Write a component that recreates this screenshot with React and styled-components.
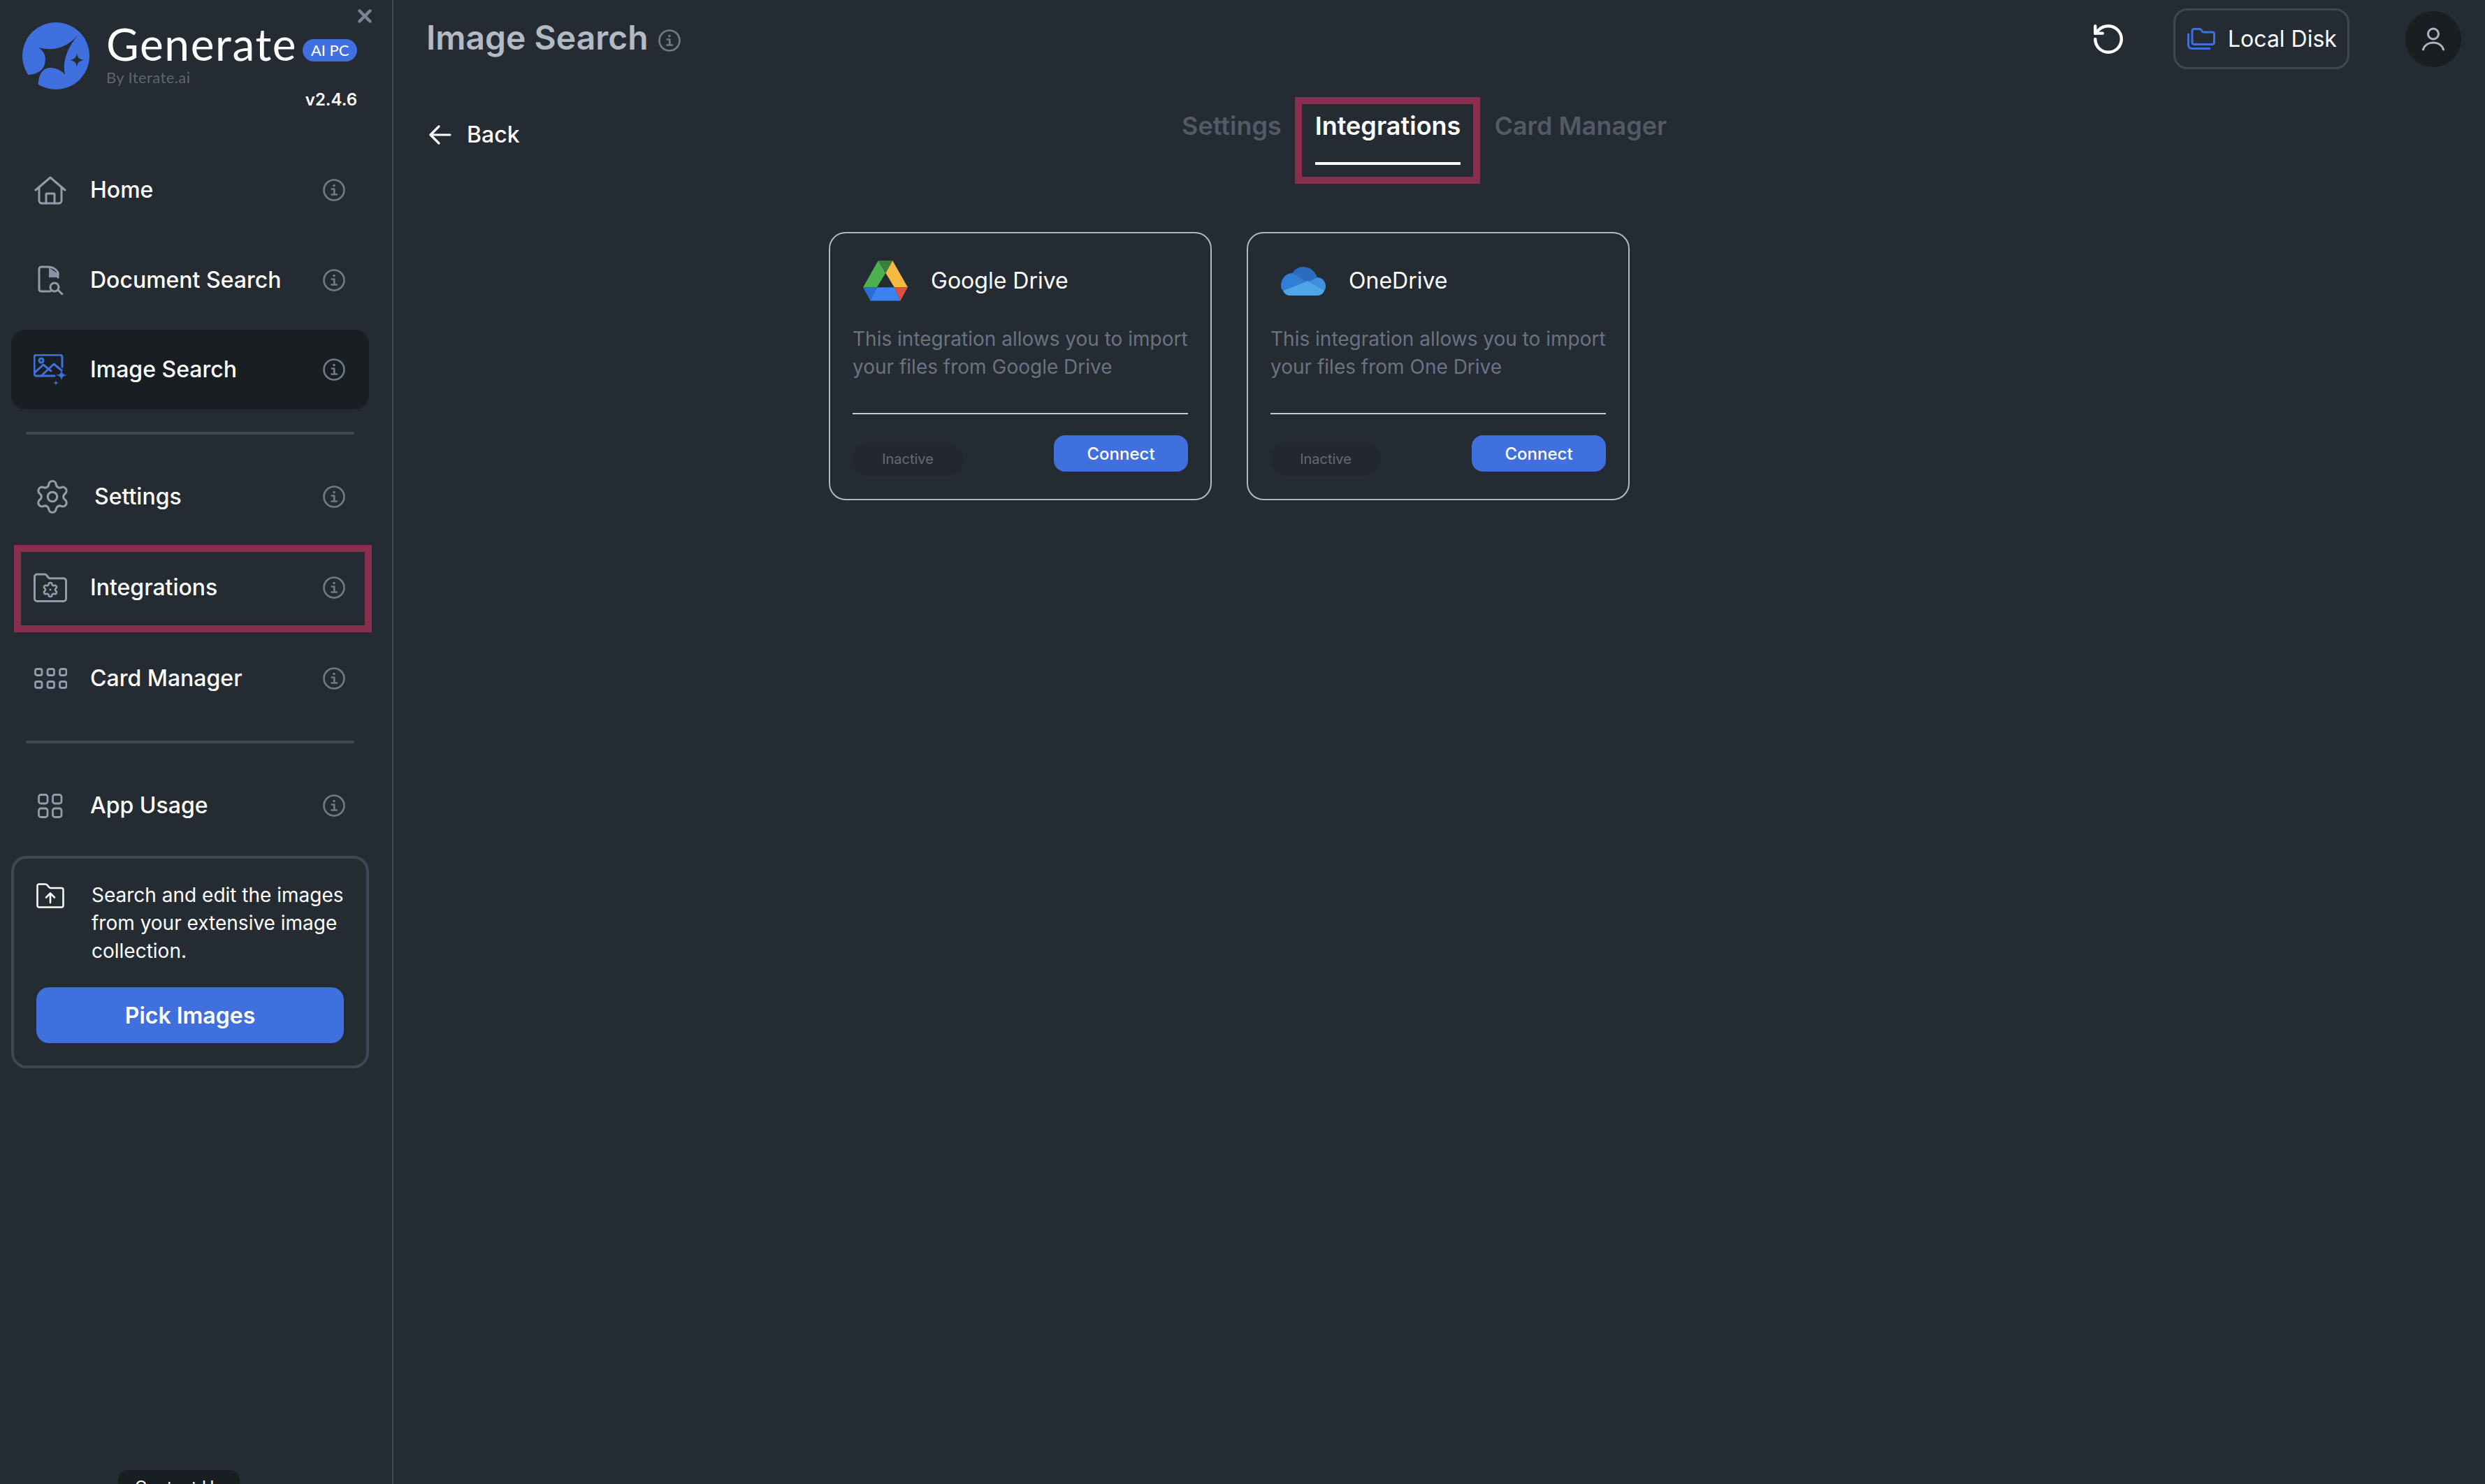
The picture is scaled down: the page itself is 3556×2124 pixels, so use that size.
import React from "react";
import styled, { createGlobalStyle } from "styled-components";
import { Settings as GearIcon, RotateCcw } from "lucide-react";

const BG = "#242b33";
const DARK = "#191e22";
const LINE = "#3f4754";
const BLUE = "#4070de";
const MARK = "#8a2e4f";
const ICON = "#939cab";

const Global = createGlobalStyle`
  html, body { margin: 0; padding: 0; background: ${BG}; overflow: hidden; }
  body { font-family: Inter, "Liberation Sans", sans-serif; color: #fff; }
  * { box-sizing: border-box; }
`;

const Page = styled.div`
  display: flex;
  width: 3556px;
  height: 2124px;
  background: ${BG};
  overflow: hidden;
`;

const Sidebar = styled.aside`
  position: relative;
  flex: 0 0 563px;
  height: 100%;
  display: flex;
  flex-direction: column;
  padding: 0 33px 0 16px;
  border-right: 2px solid ${LINE};
  overflow: hidden;
`;

const Brand = styled.div`
  position: relative;
  height: 215px;
  padding: 32px 0 0 16px;
`;

const CloseButton = styled.button`
  position: absolute;
  top: 13px;
  right: -4px;
  width: 20px;
  height: 20px;
  padding: 0;
  border: 0;
  background: none;
  display: block;
  svg { display: block; }
`;

const BrandRow = styled.div`
  display: flex;
  gap: 24px;
`;

const BrandText = styled.div`
  display: flex;
  flex-direction: column;
`;

const BrandTitleRow = styled.div`
  display: flex;
  align-items: flex-start;
  gap: 8px;
  height: 62px;
`;

const BrandName = styled.span`
  font-family: Lato, sans-serif;
  font-size: 64px;
  font-weight: 400;
  line-height: 62px;
  letter-spacing: 1.6px;
  color: #fff;
`;

const BrandBadge = styled.span`
  margin-top: 24px;
  width: 78px;
  height: 32px;
  border-radius: 16px;
  background: ${BLUE};
  color: #fff;
  font-family: Lato, sans-serif;
  font-size: 22px;
  line-height: 32px;
  text-align: center;
`;

const BrandBy = styled.span`
  font-family: Lato, sans-serif;
  font-size: 22px;
  line-height: 26px;
  letter-spacing: 0.4px;
  color: #5f6670;
  margin-top: 4px;
`;

const Version = styled.div`
  position: absolute;
  top: 128px;
  right: 17px;
  font-size: 24px;
  font-weight: 600;
  line-height: 30px;
  color: #fff;
`;

const NavGroup = styled.nav`
  display: flex;
  flex-direction: column;
  gap: ${(p) => p.$gap}px;
`;

const NavRow = styled.div`
  position: relative;
  display: flex;
  align-items: center;
  height: 114px;
  padding: 0 34px 0 32px;
  border-radius: 20px;
  background: ${(p) => (p.$active ? DARK : "transparent")};
  ${(p) =>
    p.$marked
      ? `&::after { content: ""; position: absolute; top: -4px; left: 4px; right: -4px; bottom: -7px; border: 10px solid ${MARK}; }`
      : ""}
`;

const NavIcon = styled.span`
  flex: 0 0 48px;
  display: flex;
  align-items: center;
  justify-content: center;
  color: ${(p) => (p.$active ? BLUE : ICON)};
  svg { display: block; }
`;

const NavLabel = styled.span`
  flex: 1;
  margin-left: 33px;
  font-size: 32px;
  font-weight: 500;
  line-height: 40px;
  color: #fff;
`;

const Divider = styled.div`
  height: 4px;
  margin: ${(p) => p.$top}px 21px ${(p) => p.$bottom}px;
  background: ${LINE};
`;

const PromoCard = styled.section`
  margin-top: 15px;
  height: 304px;
  padding: 32px;
  border: 4px solid ${LINE};
  border-radius: 22px;
`;

const PromoBody = styled.div`
  display: flex;
  gap: 39px;
  height: 120px;
  svg { display: block; flex: 0 0 40px; margin-top: 3px; }
`;

const PromoText = styled.p`
  margin: 0;
  font-size: 28px;
  font-weight: 400;
  line-height: 40px;
  color: #fff;
  white-space: nowrap;
`;

const PickButton = styled.button`
  display: block;
  width: 100%;
  height: 80px;
  margin-top: 32px;
  border: 0;
  border-radius: 18px;
  background: ${BLUE};
  color: #fff;
  font-family: inherit;
  font-size: 32px;
  font-weight: 600;
`;

const ContactTab = styled.div`
  position: absolute;
  left: 169px;
  top: 2104px;
  width: 174px;
  height: 50px;
  border-radius: 14px 14px 0 0;
  background: ${DARK};
  color: #fff;
  font-size: 24px;
  line-height: 26px;
  padding-top: 12px;
  text-align: center;
`;

const Main = styled.main`
  flex: 1;
  min-width: 0;
  height: 100%;
  display: flex;
  flex-direction: column;
`;

const TopBar = styled.header`
  display: flex;
  align-items: center;
  height: 87px;
  margin-top: 12px;
  padding: 0 34px 0 47px;
`;

const PageTitle = styled.h1`
  margin: 0 0 3px;
  font-size: 48px;
  font-weight: 600;
  line-height: 56px;
  color: #b4bac3;
`;

const TitleInfo = styled.span`
  margin-left: 14px;
  margin-top: 4px;
  display: flex;
  color: #707a88;
  svg { display: block; }
`;

const TopActions = styled.div`
  margin-left: auto;
  display: flex;
  align-items: center;
`;

const Refresh = styled.span`
  display: flex;
  color: #fff;
  margin-right: 68px;
  svg { display: block; }
`;

const SourceBox = styled.div`
  display: flex;
  align-items: center;
  width: 252px;
  height: 87px;
  padding-left: 17px;
  gap: 18px;
  border: 3px solid ${LINE};
  border-radius: 20px;
  font-size: 32px;
  line-height: 40px;
  svg { display: block; }
`;

const Avatar = styled.div`
  margin-left: 80px;
  width: 80px;
  height: 80px;
  border-radius: 50%;
  background: ${DARK};
  display: flex;
  align-items: center;
  justify-content: center;
  svg { display: block; }
`;

const TabRow = styled.div`
  display: flex;
  align-items: flex-start;
  margin-top: 59px;
  padding-left: 51px;
`;

const BackLink = styled.div`
  display: flex;
  align-items: center;
  gap: 22px;
  margin-top: 15px;
  width: 1077px;
  font-size: 32px;
  font-weight: 500;
  line-height: 40px;
  svg { display: block; }
`;

const Tabs = styled.div`
  display: flex;
  gap: 48px;
`;

const Tab = styled.div`
  position: relative;
  padding-bottom: 30px;
  font-size: 36px;
  font-weight: 600;
  line-height: 44px;
  color: ${(p) => (p.$active ? "#fff" : "#525a66")};
  border-bottom: 4px solid ${(p) => (p.$active ? "#fff" : "transparent")};
  ${(p) =>
    p.$active
      ? `&::after { content: ""; position: absolute; top: -19px; left: -29px; right: -28px; bottom: -31px; border: 10px solid ${MARK}; }`
      : ""}
`;

const Cards = styled.div`
  display: flex;
  gap: 50px;
  margin-top: 96px;
  padding-left: 623px;
`;

const Card = styled.article`
  width: 548px;
  height: 384px;
  padding: 32px;
  border: 2px solid #b4b9bf;
  border-radius: 24px;
`;

const CardHead = styled.div`
  display: flex;
  align-items: center;
  height: 72px;
  padding-left: 15px;
  gap: 33px;
  svg { display: block; flex: 0 0 64px; }
`;

const CardTitle = styled.h2`
  margin: 0;
  font-size: 32px;
  font-weight: 400;
  line-height: 40px;
  color: #fff;
`;

const CardDesc = styled.p`
  margin: 27px 0 0;
  height: 80px;
  font-size: 28px;
  font-weight: 400;
  line-height: 40px;
  color: #6a7382;
`;

const CardRule = styled.div`
  height: 2px;
  margin-top: 46px;
  background: #c8ccd0;
`;

const CardFoot = styled.div`
  display: flex;
  justify-content: space-between;
  align-items: flex-start;
  margin-top: 30px;
`;

const StatusPill = styled.span`
  margin-top: 11px;
  width: 158px;
  height: 47px;
  border-radius: 24px;
  background: #23272e;
  color: #636b77;
  font-size: 20px;
  line-height: 47px;
  text-align: center;
`;

const ConnectButton = styled.button`
  width: 192px;
  height: 52px;
  border: 0;
  border-radius: 16px;
  background: ${BLUE};
  color: #fff;
  font-family: inherit;
  font-size: 24px;
  font-weight: 500;
`;

const GEAR =
  "M9.671 4.136a2.34 2.34 0 0 1 4.659 0 2.34 2.34 0 0 0 3.319 1.915 2.34 2.34 0 0 1 2.33 4.033 2.34 2.34 0 0 0 0 3.831 2.34 2.34 0 0 1-2.33 4.033 2.34 2.34 0 0 0-3.319 1.915 2.34 2.34 0 0 1-4.659 0 2.34 2.34 0 0 0-3.32-1.915 2.34 2.34 0 0 1-2.33-4.033 2.34 2.34 0 0 0 0-3.831A2.34 2.34 0 0 1 6.35 6.051a2.34 2.34 0 0 0 3.319-1.915";

const Line = ({ w, h, sw = 3, children }) => (
  <svg width={w} height={h} viewBox={`0 0 ${w} ${h}`} fill="none" stroke="currentColor" strokeWidth={sw} strokeLinecap="round" strokeLinejoin="round">
    {children}
  </svg>
);

const HomeGlyph = () => (
  <Line w={46} h={41}>
    <path d="M2 20 23 2l21 18" />
    <path d="M7 16v19a4 4 0 0 0 4 4h24a4 4 0 0 0 4-4V16" />
    <path d="M17 39V26a1 1 0 0 1 1-1h10a1 1 0 0 1 1 1v13" />
  </Line>
);

const DocGlyph = () => (
  <Line w={37} h={42}>
    <path d="M15 2H5a3 3 0 0 0-3 3v29a3 3 0 0 0 3 3h13" />
    <path d="M15 2c7 0 11 3 14 8v7" />
    <path d="M16 3l12 8v6h-12z" fill="currentColor" stroke="none" opacity=".9" />
    <circle cx="24" cy="31" r="6" />
    <path d="m29 35 6 6" />
  </Line>
);

const ImageGlyph = () => (
  <svg width="48" height="45" viewBox="0 0 48 45" fill="none" stroke="currentColor" strokeWidth="3" strokeLinecap="round" strokeLinejoin="round">
    <path d="M30 31H4a3 3 0 0 1-3-3V4a3 3 0 0 1 3-3h34a3 3 0 0 1 3 3v14" />
    <circle cx="11" cy="9" r="3" />
    <path d="m2 26 12-11 11 9M11 31l18-17 11 9" />
    <path d="M40 22c1 6 2 7 8 8-6 1-7 2-8 8-1-6-2-7-8-8 6-1 7-2 8-8z" fill="currentColor" stroke="none" />
    <path d="M32 37c.6 3 1 3.4 4 4-3 .6-3.4 1-4 4-.6-3-1-3.4-4-4 3-.6 3.4-1 4-4z" fill="currentColor" stroke="none" />
  </svg>
);

const SettingsGlyph = () => <GearIcon size={54} strokeWidth={1.4} />;

const IntegrationGlyph = () => (
  <svg width="48" height="42" viewBox="0 0 48 42" fill="none" stroke="currentColor" strokeWidth="3" strokeLinecap="round" strokeLinejoin="round">
    <path d="M5 2h11c1 0 2 .5 2.600 1.200L21 6.500c.7.800 1.500 1.200 2.500 1.200H43a3.500 3.500 0 0 1 3.500 3.500V37a3.500 3.500 0 0 1-3.500 3.500H5A3.500 3.500 0 0 1 1.500 37V5.500A3.500 3.500 0 0 1 5 2z" />
    <g transform="translate(12 12) scale(1)" strokeWidth="2.600">
      <path d={GEAR} />
      <circle cx="12" cy="12" r="1.500" fill="currentColor" stroke="none" />
    </g>
  </svg>
);

const CardsGlyph = () => (
  <Line w={47} h={30} sw={2.8}>
    {[0, 17.5, 35].flatMap((x) =>
      [0, 18].map((y) => <rect key={`${x}-${y}`} x={x + 1.5} y={y + 1.5} width="9.500" height="9" rx="2.500" />)
    )}
  </Line>
);

const AppsGlyph = () => (
  <Line w={36} h={35} sw={2.8}>
    {[0, 20].flatMap((x) =>
      [0, 19.5].map((y) => <rect key={`${x}-${y}`} x={x + 1.5} y={y + 1.5} width="12.500" height="12.500" rx="3" />)
    )}
  </Line>
);

const InfoGlyph = ({ size = 32 }) => (
  <svg width={size} height={size} viewBox="0 0 32 32" fill="none" stroke="#707a88" strokeWidth="2.600" strokeLinecap="round" strokeLinejoin="round">
    <circle cx="16" cy="16" r="14.500" />
    <circle cx="16" cy="9.500" r="1.800" fill="#707a88" stroke="none" />
    <path d="M12.800 14.500H16.300V22.500M12.500 22.500H20" />
  </svg>
);

const CloseGlyph = () => (
  <svg width="20" height="20" viewBox="0 0 20 20" fill="none" stroke="#7a8494" strokeWidth="4.400" strokeLinecap="round">
    <path d="M2.500 2.500l15 15M17.500 2.500l-15 15" />
  </svg>
);

const Logo = () => (
  <svg width="96" height="96" viewBox="0 0 96 96">
    <circle cx="48" cy="48" r="48" fill={BLUE} />
    <path d="M79 19Q55 45 23 36Q33 42 33 53Q32 74 8 75L0 100H23Q20 66 40 65Q53 65 61 75Q55 48 79 19Z" fill={BG} />
    <path d="M78 44c1.300 7 3 8.700 10 10-7 1.300-8.700 3-10 10-1.300-7-3-8.700-10-10 7-1.300 8.700-3 10-10z" fill={BG} />
  </svg>
);

const UploadFolder = () => (
  <svg width="40" height="36" viewBox="0 0 40 36" fill="none" stroke="#fff" strokeWidth="2.500" strokeLinecap="round" strokeLinejoin="round">
    <path d="M3.500 1.500h9.500c1 0 1.800.4 2.400 1.100l2.700 3.200c.6.700 1.400 1.100 2.400 1.100H36a2.500 2.500 0 0 1 2.500 2.500V32a2.500 2.500 0 0 1-2.500 2.500H4A2.500 2.500 0 0 1 1.500 32V3.500a2 2 0 0 1 2-2z" />
    <path d="M20 28V15M14 20.500l6-6 6 6" />
  </svg>
);

const FoldersGlyph = () => (
  <svg width="40" height="31" viewBox="0 0 40 31" fill="none" stroke={BLUE} strokeWidth="3" strokeLinecap="round" strokeLinejoin="round">
    <path d="M9.500 1.500h8c1 0 1.800.5 2.300 1.200l1.400 2.100c.5.700 1.300 1.200 2.300 1.200H36a2.500 2.500 0 0 1 2.500 2.500V21a2.500 2.500 0 0 1-2.500 2.500H9.500A2.500 2.500 0 0 1 7 21V4a2.500 2.500 0 0 1 2.500-2.500z" />
    <path d="M1.500 9v15c0 3.500 2 5.500 5.500 5.500h25" />
  </svg>
);

const UserGlyph = () => (
  <svg width="32" height="34" viewBox="0 0 32 34" fill="none" stroke="#aeb5c0" strokeWidth="3" strokeLinecap="round">
    <circle cx="16" cy="9.500" r="7.500" />
    <path d="M1.500 32c2-6.500 8-10 14.500-10s12.500 3.500 14.500 10" />
  </svg>
);

const BackArrow = () => (
  <svg width="32" height="28" viewBox="0 0 32 28" fill="none" stroke="#fff" strokeWidth="3.200" strokeLinecap="round" strokeLinejoin="round">
    <path d="M14 2 2 14l12 12M2.500 14H30" />
  </svg>
);

const DriveLogo = () => (
  <svg width="64" height="58" viewBox="0 0 64 58">
    <polygon points="21.700,0 32.400,17.700 19.800,38.300 0,38.300" fill="#4caf50" />
    <polygon points="21.700,0 42.300,0 32.400,17.700" fill="#38803c" />
    <polygon points="42.300,0 64,38.300 44.700,38.300 32.400,17.700" fill="#f5b942" />
    <polygon points="0,38.300 19.800,38.300 10.700,57.500" fill="#2a6fd6" />
    <polygon points="19.800,38.300 44.700,38.300 53.400,57.500 10.700,57.500" fill="#3c82f0" />
    <polygon points="44.700,38.300 64,38.300 53.400,57.500" fill="#dc5040" />
  </svg>
);

const OneDriveLogo = () => (
  <svg width="64" height="41" viewBox="0 0 64 41">
    <path d="M0 27C0 17 7 9 16 9c4 0 8 1 12 4l10 7L3 34C1 32 0 30 0 27z" fill="#2f7fd6" />
    <path d="M52 15c7 0 12 6 12 13 0 2-.5 4-1.500 5L38 20z" fill="#3f90dd" />
    <path d="M16 9C20 3 26 0 32 0c9 0 16 5 20 15l-14 7z" fill="#2a6cbd" />
    <path d="M3 34l35-14 24.500 13C61 38 57 41 52 41H12c-4 0-7-3-9-7z" fill="#4fa6e6" />
  </svg>
);

const firstGroup = [
  { label: "Home", Icon: HomeGlyph },
  { label: "Document Search", Icon: DocGlyph },
  { label: "Image Search", Icon: ImageGlyph, active: true },
];

const secondGroup = [
  { label: "Settings", Icon: SettingsGlyph },
  { label: "Integrations", Icon: IntegrationGlyph, marked: true },
  { label: "Card Manager", Icon: CardsGlyph },
];

const integrations = [
  { name: "Google Drive", Logo: DriveLogo, desc: "This integration allows you to import your files from Google Drive" },
  { name: "OneDrive", Logo: OneDriveLogo, desc: "This integration allows you to import your files from One Drive" },
];

const NavItem = ({ label, Icon, active, marked }) => (
  <NavRow $active={active} $marked={marked}>
    <NavIcon $active={active}>
      <Icon />
    </NavIcon>
    <NavLabel>{label}</NavLabel>
    <InfoGlyph />
  </NavRow>
);

export default function App() {
  return (
    <Page>
      <Global />
      <Sidebar>
        <Brand>
          <CloseButton aria-label="Close">
            <CloseGlyph />
          </CloseButton>
          <BrandRow>
            <Logo />
            <BrandText>
              <BrandTitleRow>
                <BrandName>Generate</BrandName>
                <BrandBadge>AI PC</BrandBadge>
              </BrandTitleRow>
              <BrandBy>By Iterate.ai</BrandBy>
            </BrandText>
          </BrandRow>
          <Version>v2.4.6</Version>
        </Brand>
        <NavGroup $gap={14.5}>
          {firstGroup.map((item) => (
            <NavItem key={item.label} {...item} />
          ))}
        </NavGroup>
        <Divider $top={32} $bottom={32} />
        <NavGroup $gap={16}>
          {secondGroup.map((item) => (
            <NavItem key={item.label} {...item} />
          ))}
        </NavGroup>
        <Divider $top={32} $bottom={32} />
        <NavItem label="App Usage" Icon={AppsGlyph} />
        <PromoCard>
          <PromoBody>
            <UploadFolder />
            <PromoText>
              Search and edit the images
              <br />
              from your extensive image
              <br />
              collection.
            </PromoText>
          </PromoBody>
          <PickButton>Pick Images</PickButton>
        </PromoCard>
        <ContactTab>Contact Us</ContactTab>
      </Sidebar>
      <Main>
        <TopBar>
          <PageTitle>Image Search</PageTitle>
          <TitleInfo>
            <InfoGlyph />
          </TitleInfo>
          <TopActions>
            <Refresh>
              <RotateCcw size={50} strokeWidth={2.1} />
            </Refresh>
            <SourceBox>
              <FoldersGlyph />
              Local Disk
            </SourceBox>
            <Avatar>
              <UserGlyph />
            </Avatar>
          </TopActions>
        </TopBar>
        <TabRow>
          <BackLink>
            <BackArrow />
            Back
          </BackLink>
          <Tabs>
            <Tab>Settings</Tab>
            <Tab $active>Integrations</Tab>
            <Tab>Card Manager</Tab>
          </Tabs>
        </TabRow>
        <Cards>
          {integrations.map(({ name, Logo: CardLogo, desc }) => (
            <Card key={name}>
              <CardHead>
                <CardLogo />
                <CardTitle>{name}</CardTitle>
              </CardHead>
              <CardDesc>{desc}</CardDesc>
              <CardRule />
              <CardFoot>
                <StatusPill>Inactive</StatusPill>
                <ConnectButton>Connect</ConnectButton>
              </CardFoot>
            </Card>
          ))}
        </Cards>
      </Main>
    </Page>
  );
}
